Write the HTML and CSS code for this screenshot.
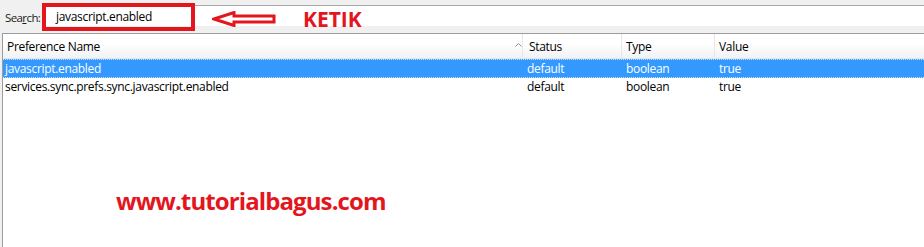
FILE: index.html
```html
<!DOCTYPE html>
<html>
<head>
<meta charset="utf-8">
<link rel="stylesheet" href="styles.css">
</head>
<body>
<div class="window">
  <div class="searchbar">
    <label class="search-label">Sea<span class="key">r</span>ch:</label>
    <div class="search-input">javascript.enabled</div>
  </div>
  <div class="tree">
    <div class="tree-head">
      <div class="col name">Preference Name<svg class="sort" width="7" height="4" viewBox="0 0 7 4"><path d="M0.5 3.5 L3.5 0.5 L6.5 3.5" fill="none" stroke="#8a8f96" stroke-width="1"/></svg></div>
      <div class="col status">Status</div>
      <div class="col type">Type</div>
      <div class="col value">Value</div>
    </div>
    <div class="row selected">
      <div class="col name">javascript.enabled</div>
      <div class="col status">default</div>
      <div class="col type">boolean</div>
      <div class="col value">true</div>
    </div>
    <div class="row">
      <div class="col name">services.sync.prefs.sync.javascript.enabled</div>
      <div class="col status">default</div>
      <div class="col type">boolean</div>
      <div class="col value">true</div>
    </div>
  </div>

  <div class="mark-box"></div>
  <svg class="mark-arrow" width="66" height="16" viewBox="0 0 66 16">
    <path d="M2 8 L22 1.5 L22 5 L62 5 L62 11 L22 11 L22 14.5 Z" fill="#fff" stroke="#e3161e" stroke-width="3" stroke-linejoin="miter"/>
  </svg>
  <div class="mark-text">KETIK</div>
  <div class="watermark">www.tutorialbagus.com</div>
</div>
</body>
</html>
```
FILE: styles.css
```css
html, body {
  margin: 0;
  padding: 0;
}
body {
  background: #ffffff;
  font-family: "Open Sans", "Noto Sans", sans-serif;
  font-size: 12px;
  letter-spacing: -0.32px;
  color: #000;
}
.window {
  position: relative;
  width: 924px;
  height: 247px;
  overflow: hidden;
  background: #f0f0f0;
  display: flex;
  flex-direction: column;
}
.searchbar {
  display: flex;
  align-items: flex-start;
  height: 33px;
}
.search-label {
  padding: 10px 0 0 5px;
  width: 40px;
  line-height: 16px;
  font-size: 11.5px;
  letter-spacing: -0.6px;
  white-space: nowrap;
  color: #1a1a1a;
}
.key {
  text-decoration: underline;
}
.search-input {
  flex: 1;
  margin-top: 5px;
  height: 21px;
  box-sizing: border-box;
  background: #fff;
  border-top: 1px solid #a9a9a9;
  border-left: 1px solid #cfcfcf;
  padding: 3px 0 0 10px;
  line-height: 16px;
}
.tree {
  flex: 1;
  margin-left: 2px;
  background: #fff;
  border-top: 1px solid #9c9c9c;
  border-left: 1px solid #9c9c9c;
}
.tree-head {
  display: flex;
  height: 25px;
  background: linear-gradient(#ffffff 0%, #ffffff 40%, #f1f2f4 100%);
  border-bottom: 1px solid #e3e4e6;
  box-sizing: border-box;
}
.tree-head .col {
  height: 24px;
  padding-top: 4px;
  line-height: 18px;
  border-right: 1px solid #e6e7e9;
  position: relative;
}
.col { box-sizing: border-box; }
.col.name { width: 520px; padding-left: 4px; }
.col.status { width: 99px; padding-left: 4px; }
.col.type { width: 93px; padding-left: 4px; }
.col.value { flex: 1; padding-left: 4px; }
.tree-head .col.status { padding-left: 6px; }
.tree-head .col.value { border-right: none; }
.sort {
  position: absolute;
  left: 512px;
  top: 9px;
}
.row {
  display: flex;
  height: 19px;
  line-height: 17px;
  box-sizing: border-box;
}
.row .col.name { padding-left: 2px; }
.row.selected {
  background: #3399ff;
  color: #fff;
  border-top: 1px dotted #c8e0f8;
  border-bottom: 1px dotted #c8e0f8;
}
.mark-box {
  position: absolute;
  left: 42px;
  top: 3px;
  width: 153px;
  height: 28px;
  box-sizing: border-box;
  border: 4px solid #e3161e;
}
.mark-arrow {
  position: absolute;
  left: 212px;
  top: 11px;
}
.mark-text {
  position: absolute;
  left: 303px;
  top: 6px;
  font-family: "Open Sans", sans-serif;
  font-weight: 700;
  font-size: 21px;
  letter-spacing: 0;
  line-height: 26px;
  color: #e3161e;
}
.watermark {
  position: absolute;
  left: 116px;
  top: 186px;
  font-family: "Open Sans", sans-serif;
  font-weight: 700;
  font-size: 24px;
  letter-spacing: -0.9px;
  line-height: 30px;
  color: #e3161e;
}
```
